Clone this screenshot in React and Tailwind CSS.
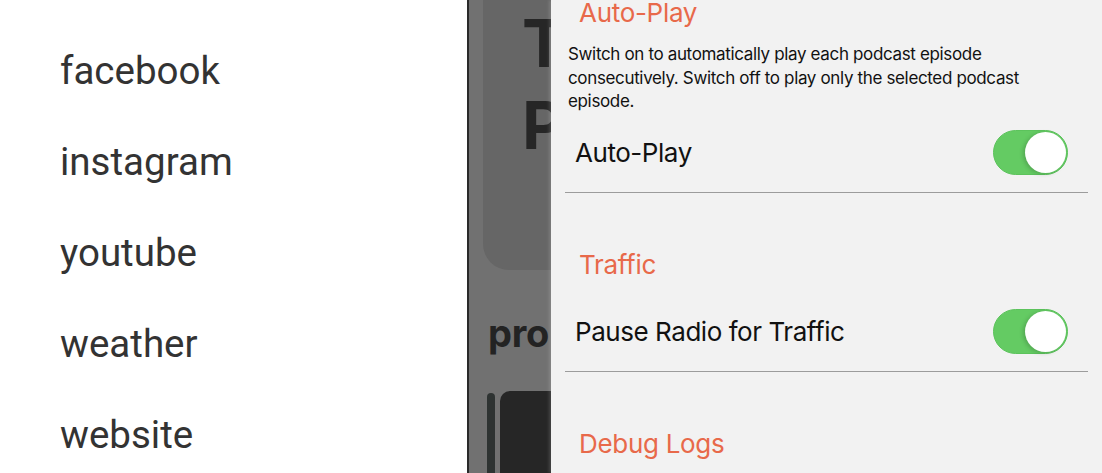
const links = ["facebook", "instagram", "youtube", "weather", "website"];

function Toggle() {
  return (
    <div className="relative w-[75px] h-[45px] rounded-full bg-[#64cb63] border border-[#5cc35c] flex-shrink-0">
      <div className="absolute right-[1px] top-[1px] w-[41px] h-[41px] rounded-full bg-white shadow-[-2px_1px_4px_rgba(0,0,0,0.18)]" />
    </div>
  );
}

function Header({ children, top }) {
  return (
    <div className={`pl-[28px] text-[26px] leading-[30px] text-[#e8694a] tracking-[-0.3px] ${top}`}>
      {children}
    </div>
  );
}

function Row({ label }) {
  return (
    <div className="mx-[14px] h-[80px] flex items-center justify-between pl-[10px] pr-[20px] border-b border-[#9c9c9c]">
      <span className="text-[26px] leading-[30px] text-[#111] tracking-[-0.45px]">{label}</span>
      <Toggle />
    </div>
  );
}

export default function App() {
  return (
    <div className="flex w-[1102px] h-[473px] overflow-hidden">
      {/* Left list */}
      <div
        className="w-[467px] h-full bg-white pt-[25px] pl-[60px]"
        style={{ fontFamily: "Roboto, sans-serif" }}
      >
        {links.map((l) => (
          <div key={l} className="h-[91px] leading-[91px] text-[38.5px] text-[#333]">
            {l}
          </div>
        ))}
      </div>

      {/* Dimmed page behind the sheet */}
      <div
        className="w-[84px] h-full border-l-2 border-[#2a2a2a] bg-[#717171] flex flex-col overflow-hidden"
        style={{ fontFamily: "Inter, sans-serif" }}
      >
        <div className="ml-[14px] h-[270px] bg-[#666] rounded-bl-[26px] pl-[39px] pt-[2px] text-[66px] leading-[82px] font-bold text-[#262626] whitespace-nowrap">
          <div>T</div>
          <div>P</div>
        </div>
        <div className="mt-[41px] pl-[19px] text-[38px] leading-[44px] font-bold text-[#232323] whitespace-nowrap tracking-[-0.3px]">
          pro
        </div>
        <div className="mt-[36px] flex gap-[5px] pl-[18px] flex-1">
          <div className="w-[8px] mt-[2px] bg-[#2e3332] rounded-t-full" />
          <div className="flex-1 bg-[#262626] rounded-tl-[10px]" />
        </div>
      </div>

      {/* Settings sheet */}
      <div
        className="flex-1 h-full bg-[#f2f2f2] shadow-[-2px_0_3px_rgba(255,255,255,0.15)]"
        style={{ fontFamily: "Inter, sans-serif" }}
      >
        <Header top="mt-[-2px]">Auto-Play</Header>
        <p className="mt-[15px] pl-[17px] text-[17px] leading-[23.5px] text-[#111] tracking-[-0.35px] h-[70px]">
          Switch on to automatically play each podcast episode
          <br />
          consecutively. Switch off to play only the selected podcast
          <br />
          episode.
        </p>
        <Row label="Auto-Play" />
        <Header top="pt-[57px] pb-[12px]">Traffic</Header>
        <Row label="Pause Radio for Traffic" />
        <Header top="pt-[57px]">Debug Logs</Header>
      </div>
    </div>
  );
}
